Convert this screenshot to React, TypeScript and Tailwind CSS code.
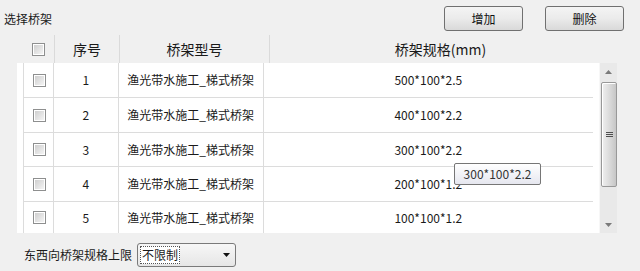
import React from 'react'

const font = "font-['Noto_Sans_CJK_SC','Noto_Sans',sans-serif]"

const rows = [
  { id: 1, model: '渔光带水施工_梯式桥架', spec: '500*100*2.5', h: 'h-[35px] border-b' },
  { id: 2, model: '渔光带水施工_梯式桥架', spec: '400*100*2.2', h: 'h-[35px] border-b' },
  { id: 3, model: '渔光带水施工_梯式桥架', spec: '300*100*2.2', h: 'h-[34px] border-b' },
  { id: 4, model: '渔光带水施工_梯式桥架', spec: '200*100*1.2', h: 'h-[35px] border-b' },
  { id: 5, model: '渔光带水施工_梯式桥架', spec: '100*100*1.2', h: 'h-[31px]' },
]

function CheckBox() {
  return (
    <span className="flex h-[13px] w-[13px] items-center justify-center border border-[#8e8f8f] bg-white">
      <span className="h-[9px] w-[9px] bg-gradient-to-br from-[#cfcfcf] to-[#f4f4f4]" />
    </span>
  )
}

function Button({ label }: { label: string }) {
  return (
    <button
      type="button"
      className="flex h-[25px] w-[79px] items-center justify-center rounded-[3px] border border-[#707070] bg-gradient-to-b from-[#f4f4f4] via-[#ebebeb] to-[#d9d9d9] text-[12px] leading-none text-[#111]"
    >
      {label}
    </button>
  )
}

function Arrow({ up }: { up?: boolean }) {
  return (
    <svg width="7" height="4" viewBox="0 0 7 4" aria-hidden="true">
      <path d={up ? 'M0 4 L3.5 0 L7 4 Z' : 'M0 0 L3.5 4 L7 0 Z'} fill="#7a7a7a" />
    </svg>
  )
}

export default function App() {
  return (
    <div className={`relative h-[271px] w-[640px] overflow-hidden bg-[#f0f0f0] text-[#1a1a1a] ${font}`}>
      {/* title and actions */}
      <div className="flex h-[25px] items-center pl-[4px] pr-[16px] pt-0 mt-[6px]">
        <span className="text-[12px] leading-none">选择桥架</span>
        <span className="flex-1" />
        <div className="flex gap-[22px]">
          <Button label="增加" />
          <Button label="删除" />
        </div>
      </div>

      {/* header */}
      <div className="ml-[17px] mt-[2px] flex h-[30px] w-[600px] pt-[2px] text-[14px] leading-none">
        <div className="flex w-[37px] items-center pl-[15px]">
          <CheckBox />
        </div>
        <div className="flex w-[65px] items-center justify-center border-l border-[#dadada]">序号</div>
        <div className="flex w-[150px] items-center justify-center border-l border-[#dadada]">桥架型号</div>
        <div className="flex w-[348px] items-center justify-center border-l border-[#dadada] pr-[6px]">桥架规格(mm)</div>
      </div>

      {/* body */}
      <div className="ml-[17px] flex h-[170px] w-[600px] bg-white text-[12px] leading-none">
        <div className="ml-[6px] flex w-[570px] flex-col border-l border-[#dcdcdc]">
          {rows.map((r) => (
            <div key={r.id} className={`flex ${r.h} border-[#dcdcdc]`}>
              <div className="flex w-[29px] items-center justify-center pl-[2px]">
                <CheckBox />
              </div>
              <div className="flex w-[65px] items-center justify-center border-l border-[#dcdcdc]">{r.id}</div>
              <div className="flex w-[145px] items-center justify-center border-l border-[#dcdcdc]">{r.model}</div>
              <div className="flex w-[331px] items-center justify-center border-l border-[#dcdcdc]">{r.spec}</div>
            </div>
          ))}
        </div>

        {/* scrollbar */}
        <div className="ml-[6px] flex w-[18px] flex-col border-l border-[#f7f7f7] bg-[#e9e9e9]">
          <div className="flex h-[17px] items-center justify-center">
            <Arrow up />
          </div>
          <div className="ml-[1px] mt-[2px] flex h-[105px] w-[16px] items-center justify-center rounded-[2px] border border-[#989898] bg-gradient-to-r from-[#f0f0f0] via-[#dcdcdc] to-[#c6c6c6] shadow-[inset_1px_1px_0_#ffffff]">
            <div className="flex flex-col gap-[1px]">
              <span className="h-[1px] w-[7px] bg-[#4f4f4f]" />
              <span className="h-[1px] w-[7px] bg-[#4f4f4f]" />
              <span className="h-[1px] w-[7px] bg-[#4f4f4f]" />
            </div>
          </div>
          <span className="flex-1" />
          <div className="flex h-[17px] items-center justify-center">
            <Arrow />
          </div>
        </div>
      </div>

      {/* filter */}
      <div className="mt-[10px] flex h-[24px] items-center pl-[24px] text-[12px] leading-none">
        <span>东西向桥架规格上限</span>
        <div className="ml-[5px] flex h-[24px] w-[99px] items-center rounded-[3px] border border-[#7a7a7a] bg-gradient-to-b from-[#f7f7f7] to-[#e6e6e6] pl-[2px] pr-[5px]">
          <span className="flex h-[18px] items-center border border-dotted border-[#555] bg-white px-[1px]">不限制</span>
          <span className="flex-1" />
          <svg width="7" height="4" viewBox="0 0 7 4" aria-hidden="true">
            <path d="M0 0 L3.5 4 L7 0 Z" fill="#111" />
          </svg>
        </div>
      </div>

      {/* tooltip */}
      <div className="absolute left-[454px] top-[163px] flex h-[22px] w-[87px] items-center justify-center rounded-[2px] border border-[#767676] bg-gradient-to-b from-white to-[#e6e7ef] text-[12px] leading-none text-[#333]">
        300*100*2.2
      </div>
    </div>
  )
}
